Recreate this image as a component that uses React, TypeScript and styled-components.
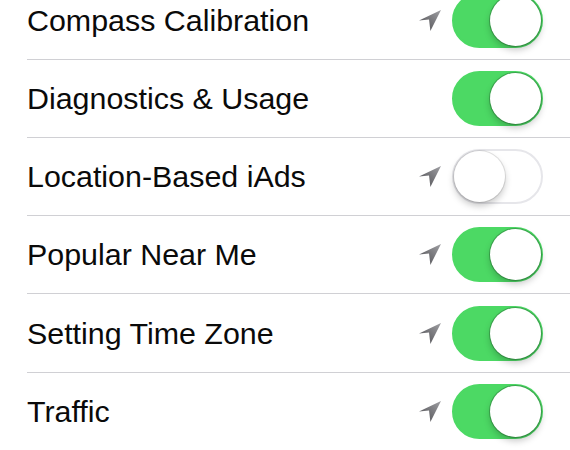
import styled, { createGlobalStyle } from "styled-components";

const GlobalStyle = createGlobalStyle`
  html, body {
    margin: 0;
    padding: 0;
    background: #ffffff;
    overflow: hidden;
  }
  body {
    font-family: "Liberation Sans", Arial, sans-serif;
  }
`;

const Screen = styled.div`
  width: 570px;
  height: 450px;
  overflow: hidden;
  background: #ffffff;
`;

const List = styled.ul`
  list-style: none;
  margin: -18.3px 0 0 0;
  padding: 0;
`;

const Row = styled.li`
  display: flex;
  align-items: center;
  justify-content: space-between;
  box-sizing: border-box;
  height: 78.2px;
  margin-left: 27px;
  padding-right: 27px;
  border-bottom: 1px solid #d0d0d4;
`;

const Label = styled.span`
  font-size: 30.4px;
  color: #0a0a0a;
  white-space: nowrap;
`;

const Controls = styled.div`
  display: flex;
  align-items: center;
  gap: 11px;
`;

const Toggle = styled.div<{ $on: boolean }>`
  position: relative;
  box-sizing: border-box;
  width: 91px;
  height: 55px;
  border-radius: 28px;
  background: ${(p) => (p.$on ? "#4cd964" : "#ffffff")};
  border: 2px solid ${(p) => (p.$on ? "#4cd964" : "#e6e6ea")};
`;

const Knob = styled.div<{ $on: boolean }>`
  position: absolute;
  top: 0;
  left: ${(p) => (p.$on ? "36px" : "0")};
  width: 51px;
  height: 51px;
  border-radius: 50%;
  background: #ffffff;
  box-shadow: 0 0 0 1px rgba(0, 0, 0, ${(p) => (p.$on ? 0.22 : 0.1)}),
    0 4px 7px rgba(0, 0, 0, 0.22);
`;

const ArrowSlot = styled.div<{ $show: boolean }>`
  width: 22px;
  height: 21px;
  visibility: ${(p) => (p.$show ? "visible" : "hidden")};
  display: flex;
`;

function LocationArrow() {
  return (
    <svg width="22" height="21" viewBox="0 0 22 21">
      <defs>
        <linearGradient id="arrowGrad" x1="0" y1="1" x2="1" y2="0">
          <stop offset="0" stopColor="#4a4a4e" />
          <stop offset="1" stopColor="#a0a0a4" />
        </linearGradient>
      </defs>
      <path d="M22 0 L0 10.4 L10 9.4 L11.4 21 Z" fill="url(#arrowGrad)" />
    </svg>
  );
}

const settings = [
  { name: "Compass Calibration", located: true, on: true },
  { name: "Diagnostics & Usage", located: false, on: true },
  { name: "Location-Based iAds", located: true, on: false },
  { name: "Popular Near Me", located: true, on: true },
  { name: "Setting Time Zone", located: true, on: true },
  { name: "Traffic", located: true, on: true },
];

export default function App() {
  return (
    <Screen>
      <GlobalStyle />
      <List>
        {settings.map((s) => (
          <Row key={s.name}>
            <Label>{s.name}</Label>
            <Controls>
              <ArrowSlot $show={s.located}>
                <LocationArrow />
              </ArrowSlot>
              <Toggle $on={s.on}>
                <Knob $on={s.on} />
              </Toggle>
            </Controls>
          </Row>
        ))}
      </List>
    </Screen>
  );
}
